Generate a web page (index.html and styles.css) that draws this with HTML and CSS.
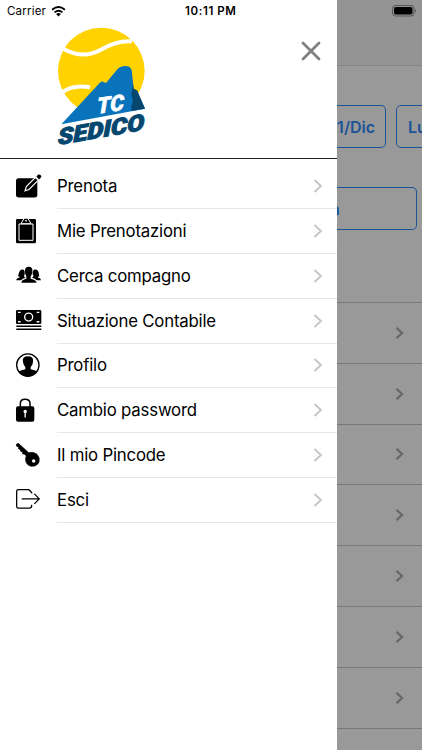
FILE: index.html
```html
<!DOCTYPE html>
<html lang="it">
<head>
<meta charset="utf-8">
<meta name="viewport" content="width=device-width, initial-scale=1">
<title>TC Sedico</title>
<link rel="stylesheet" href="styles.css">
</head>
<body>
<svg width="0" height="0" class="defs"><symbol id="chev" viewBox="0 0 10 14"><path d="M1.5 1 L8 7 L1.5 13" fill="none" stroke="currentColor"/></symbol></svg>
<div class="screen">
  <aside class="drawer">
    <div class="status">
      <span class="carrier">Carrier</span>
      <svg class="wifi" viewBox="0 0 48 36"><g fill="none" stroke="#000" stroke-width="6"><path d="M3 12 Q24 -5 45 12"/><path d="M11 21 Q24 10 37 21"/></g><path d="M16 26 Q24 20 32 26 L24 34Z"/></svg>
      <span class="time">10:11 PM</span>
    </div>
    <header class="brand">
      <svg class="logo" viewBox="0 0 390 420">
        <circle cx="184" cy="153" r="130" fill="#ffd200"/>
        <g fill="none" stroke="#fff" stroke-width="12"><path d="M70 86 C112 110 146 109 181 90 C215 70 242 61 276 64"/><path d="M64 220 C87 200 112 195 150 202"/></g>
        <path d="M50 324 L64 313 L315 266 L330 250 V380 H50Z" fill="#fff"/>
        <path d="M64 313 L181 187 Q187 182 192 187 L198 189 L231 149 Q240 138 256 138 Q272 138 275 151 L281 207 L291 211 L315 266Z" fill="#0873bb"/>
        <path d="M272 143 L281 207 L291 211 L315 266 L275 273 L274 260 L279 242 L274 226 L279 190Z" fill="#064770"/>
        <text class="tc" transform="translate(172 281) skewY(-8)" textLength="80" lengthAdjust="spacingAndGlyphs">TC</text>
        <text class="name" transform="translate(54 375) skewY(-10)" textLength="259" lengthAdjust="spacingAndGlyphs">SEDICO</text>
      </svg>
      <svg class="close" viewBox="0 0 20 20"><path d="M2 2 L18 18 M18 2 L2 18"/></svg>
    </header>
    <nav class="menu">
      <a class="item"><svg class="icon" viewBox="45 51.6 84 84"><rect x="48" y="67" width="64" height="58" rx="8"/><path d="M75 105 L79 92 L106 65 L115 73 L87 101Z" fill="#000" stroke="#fff" stroke-width="3.500"/><path d="M109 62 L114 57 Q118 54 123 59 Q126 63 122 66 L117 71Z"/></svg><span class="label">Prenota<svg class="chevron"><use href="#chev"/></svg></span></a>
      <a class="item"><svg class="icon" viewBox="45 186 84 84"><rect x="48" y="189" width="60" height="73" rx="4"/><path d="M57 204 H99 V253 H57Z" fill="none" stroke="#fff" stroke-width="3"/><path d="M63 203 L69 192 Q78 180 87 192 L93 203Z" stroke="#fff" stroke-width="3"/><circle cx="78" cy="194" r="2.5" fill="#fff"/></svg><span class="label">Mie Prenotazioni<svg class="chevron"><use href="#chev"/></svg></span></a>
      <a class="item"><svg class="icon" viewBox="45 35.4 84 84"><path d="M64 98 Q64 89 79 86 V79 Q75 74 75 64 Q74 50 86 50 Q99 50 97 65 Q97 74 92 79 V86 Q108 89 110 98Z"/><path d="M49 90 Q49 84 59 82 Q60 78 54 79 Q58 57 66 58 Q76 57 74 72 Q71 76 73 81 L78 83 Q66 85 63 90Z M123 90 Q123 84 114 82 Q112 78 118 79 Q116 57 107 58 Q97 57 98 72 Q102 76 99 81 L95 83 Q107 85 110 90Z"/></svg><span class="label">Cerca compagno<svg class="chevron"><use href="#chev"/></svg></span></a>
      <a class="item"><svg class="icon" viewBox="45 169.8 84 84"><rect x="48" y="179" width="76" height="42" rx="4"/><circle cx="86" cy="200" r="12" fill="none" stroke="#fff" stroke-width="4"/><path d="M54 186 H62 M110 186 H118 M54 214 H62 M110 214 H118" stroke="#fff" stroke-width="4"/><path d="M49 227.500 H124 M49 236.500 H124" stroke="#000" stroke-width="4"/></svg><span class="label">Situazione Contabile<svg class="chevron"><use href="#chev"/></svg></span></a>
      <a class="item"><svg class="icon" viewBox="45 34.2 84 84"><circle cx="83.500" cy="73.500" r="33.500" fill="#fff" stroke="#000" stroke-width="4"/><path d="M56 93 Q64 88 76 86 V79 Q70 73 69 64 Q65 47 84 47 Q102 47 99 64 Q98 74 92 79 V86 Q104 88 112 93 Q102 107 84 107 Q67 107 56 93Z"/></svg><span class="label">Profilo<svg class="chevron"><use href="#chev"/></svg></span></a>
      <a class="item"><svg class="icon" viewBox="45 168.6 84 84"><rect x="48" y="196" width="55" height="47" rx="6"/><path d="M61 199 V188 Q61 175 75 175 Q90 175 90 188 V199" fill="none" stroke="#000" stroke-width="4.500"/><circle cx="75.500" cy="212" r="5" fill="#fff"/><path d="M75.500 212 V230" stroke="#fff" stroke-width="4"/></svg><span class="label">Cambio password<svg class="chevron"><use href="#chev"/></svg></span></a>
      <a class="item"><svg class="icon" viewBox="45 33 84 84"><path d="M49 40 L55 37 L86 65 Q100 61 111 70 Q122 82 116 96 Q108 107 94 106 Q78 102 77 88 Q76 80 79 75 L73 69 L68 69 L68 63 L62 61 L61 56 L56 54 L56 48 L50 46Z" stroke="#000" stroke-width="2"/><circle cx="101" cy="90" r="5" fill="#fff"/></svg><span class="label">Il mio Pincode<svg class="chevron"><use href="#chev"/></svg></span></a>
      <a class="item"><svg class="icon" viewBox="45 167.4 84 84"><path d="M95 190 V187 L86 178 H55 Q50 178 50 183 V229 Q50 234 55 234 H88 Q95 234 95 226 V224 M65 206 H117 M103 191 L118 206 L103 221" fill="none" stroke="#000" stroke-width="3.800" stroke-linejoin="round"/></svg><span class="label">Esci<svg class="chevron"><use href="#chev"/></svg></span></a>
    </nav>
  </aside>
  <main class="page">
    <div class="topbar"><svg class="battery" viewBox="0 0 25 12"><rect x=".5" y=".5" width="21.500" height="10.500" rx="3" fill="none" stroke="#555"/><rect x="2" y="2" width="18.500" height="7.500" rx="1.800"/><path d="M23 4 Q25 5.750 23 7.500Z" fill="#555"/></svg></div>
    <div class="days"><div class="day past">1/Dic</div><div class="day next">Lu</div></div>
    <div class="field"><span>n</span></div>
    <div class="rows">
      <div class="row"><svg><use href="#chev"/></svg></div><div class="row"><svg><use href="#chev"/></svg></div><div class="row"><svg><use href="#chev"/></svg></div><div class="row"><svg><use href="#chev"/></svg></div><div class="row"><svg><use href="#chev"/></svg></div><div class="row"><svg><use href="#chev"/></svg></div><div class="row"><svg><use href="#chev"/></svg></div><div class="row"></div>
    </div>
  </main>
</div>
</body>
</html>
```
FILE: styles.css
```css
* { box-sizing: border-box; }
body { margin: 0; font-family: Inter, "Liberation Sans", sans-serif; color: #000; }
svg { display: block; flex: none; }
.defs { display: none; }
.screen { display: grid; grid-template-columns: 337px 85px; height: 750px; overflow: hidden; }
.drawer { background: #fff; min-width: 0; }
.status { display: flex; align-items: center; height: 22px; padding-left: 7px; font-size: 11.5px; }
.carrier { width: 40px; letter-spacing: .2px; white-space: nowrap; }
.wifi { width: 15px; height: 11px; margin-left: 4px; }
.time { margin-left: 119px; font-weight: 600; font-size: 11.5px; letter-spacing: .6px; white-space: nowrap; }
.brand { display: flex; justify-content: space-between; height: 137px; padding: 0 16px 0 40px; border-bottom: 1.5px solid #222; }
.logo { width: 130px; height: 140px; margin-top: -2px; }
.close { width: 20px; height: 20px; margin-top: 19px; fill: none; stroke: #808080; stroke-width: 2.8; stroke-linecap: round; }
.tc, .name { font-family: Roboto, "Liberation Sans", sans-serif; font-weight: 900; font-style: italic; }
.tc { font-size: 66px; fill: #fff; stroke: #fff; stroke-width: 2; }
.name { font-size: 68px; fill: #064770; stroke: #064770; stroke-width: 3; }
.menu { padding-top: 5.4px; }
.item { display: flex; align-items: center; height: 44.8px; padding-left: 15px; }
.icon { width: 28px; height: 28px; }
.label { display: flex; flex: 1; align-items: center; justify-content: space-between; height: 100%; margin-left: 14px; padding-right: 14px; border-bottom: 1px solid #e7e7e8; font-size: 16.8px; letter-spacing: -.2px; white-space: nowrap; }
.chevron { width: 10px; height: 14px; color: #c4c4c8; stroke-width: 1.8; }
.page { background: #999; overflow: hidden; min-width: 0; }
.topbar { height: 66px; padding: 5px 0 0 55px; background: #949494; border-bottom: 1px solid #858585; }
.battery { width: 25px; height: 12px; }
.days { display: flex; gap: 10px; margin-top: 39px; }
.day { flex: none; display: flex; align-items: center; height: 43px; border: 1.5px solid #1b5397; border-radius: 5px; color: #1b5397; font-weight: 600; font-size: 16px; }
.past { width: 49px; border-left: 0; border-radius: 0 5px 5px 0; justify-content: flex-end; padding-right: 10px; }
.next { width: 80px; padding-left: 11px; }
.field { display: flex; align-items: center; width: 80px; height: 43px; margin-top: 39px; border: 1.5px solid #1b5397; border-left: 0; border-radius: 0 5px 5px 0; color: #1b5397; font-weight: 600; font-size: 16px; }
.field span { margin-left: -7px; }
.rows { margin-top: 72px; }
.row { display: flex; align-items: center; justify-content: flex-end; height: 60.8px; padding-right: 18px; border-top: 1px solid #777; }
.row svg { width: 9px; height: 12px; color: #666; stroke-width: 2.5; }
```
